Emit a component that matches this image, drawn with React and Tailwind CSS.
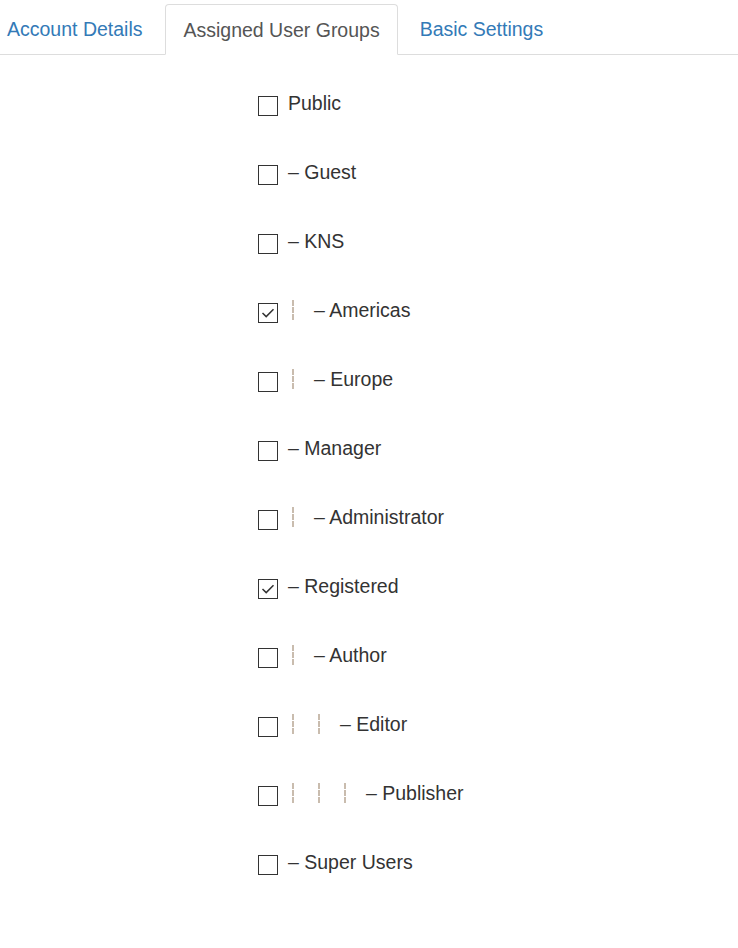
import React from "react";

const groups = [
  { name: "Public", level: -1, checked: false },
  { name: "Guest", level: 0, checked: false },
  { name: "KNS", level: 0, checked: false },
  { name: "Americas", level: 1, checked: true },
  { name: "Europe", level: 1, checked: false },
  { name: "Manager", level: 0, checked: false },
  { name: "Administrator", level: 1, checked: false },
  { name: "Registered", level: 0, checked: true },
  { name: "Author", level: 1, checked: false },
  { name: "Editor", level: 2, checked: false },
  { name: "Publisher", level: 3, checked: false },
  { name: "Super Users", level: 0, checked: false },
];

function Box({ checked }) {
  return (
    <span className="w-[20px] h-[20px] border border-[#333] bg-white flex items-center justify-center shrink-0 mt-[7px]">
      {checked && (
        <svg width="16" height="16" viewBox="0 0 16 16" fill="none">
          <path d="M2.5 8 L6.2 11.6 L13.5 4.2" stroke="#333" strokeWidth="1.5" />
        </svg>
      )}
    </span>
  );
}

function Dash() {
  return (
    <span className="w-[26px] h-[20px] flex shrink-0 mt-[4px]">
      <span className="ml-[4px] h-[20px] border-l-2 border-dashed border-[#c9bcae]" />
    </span>
  );
}

export default function App() {
  return (
    <div className="w-[738px] h-[948px] bg-white text-[#333] font-['Liberation_Sans',Arial,sans-serif]">
      <div className="flex h-[55px] border-b border-[#ddd] pt-[4px] text-[19.5px]">
        <div className="flex items-center pt-[2px] pl-[7px] pr-[18px] mr-[5px] text-[#337ab7] h-[50px]">Account Details</div>
        <div className="flex items-center pt-[2px] px-[17px] h-[51px] border border-[#ddd] border-b-white rounded-t-[4px] bg-white text-[#555]">
          Assigned User Groups
        </div>
        <div className="flex items-center pt-[2px] ml-[5px] px-[17px] text-[#337ab7] h-[50px]">Basic Settings</div>
      </div>
      <div className="pl-[258px] pt-[34px] text-[19.5px]">
        {groups.map((g, i) => (
          <div key={i} className="flex h-[69px] items-start">
            <Box checked={g.checked} />
            <div className="flex ml-[10px] leading-[28px] items-start">
              {g.level > 0 &&
                Array.from({ length: g.level }).map((_, j) => <Dash key={j} />)}
              <span>{g.level >= 0 ? "– " + g.name : g.name}</span>
            </div>
          </div>
        ))}
      </div>
    </div>
  );
}
